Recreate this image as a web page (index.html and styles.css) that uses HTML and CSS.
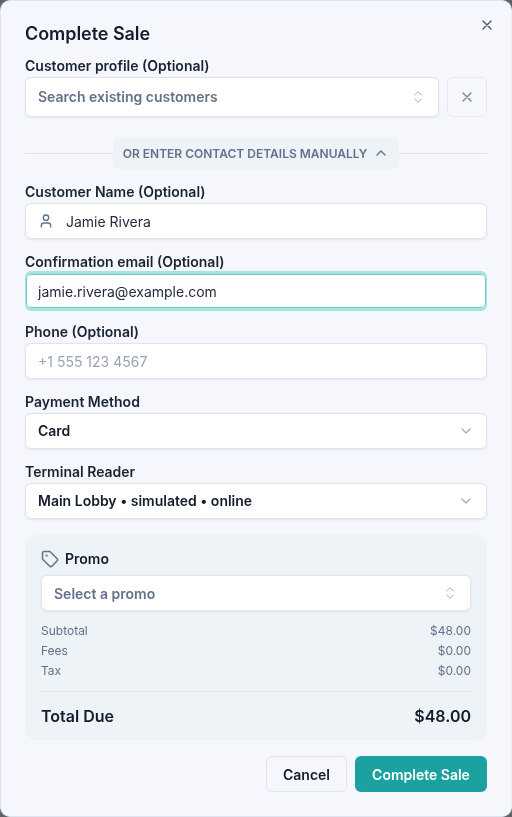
FILE: index.html
```html
<!DOCTYPE html>
<html lang="en">
<head>
<meta charset="utf-8">
<title>Complete Sale</title>
<link rel="stylesheet" href="styles.css">
</head>
<body>
<div class="modal">
  <button class="close" aria-label="Close"><svg width="16" height="16" viewBox="0 0 24 24" class="ic"><path d="M18 6 6 18M6 6l12 12"/></svg></button>
  <h1>Complete Sale</h1>
  <div class="label">Customer profile (Optional)</div>
  <div class="profile">
    <div class="input tall grow"><span class="ph semi lift">Search existing customers</span>
      <svg class="updown" width="16" height="16" viewBox="0 0 24 24"><path d="m7 15 5 5 5-5M7 9l5-5 5 5"/></svg></div>
    <button class="clear" aria-label="Clear"><svg width="16" height="16" viewBox="0 0 24 24" class="ic"><path d="M18 6 6 18M6 6l12 12"/></svg></button>
  </div>
  <div class="divider"><span class="pill">OR ENTER CONTACT DETAILS MANUALLY<svg width="16" height="16" viewBox="0 0 24 24"><path d="m18 15-6-6-6 6"/></svg></span></div>
  <div class="field">
    <div class="label">Customer Name (Optional)</div>
    <div class="input"><svg class="user" width="16" height="16" viewBox="0 0 24 24"><path d="M19 21v-2a4 4 0 0 0-4-4H9a4 4 0 0 0-4 4v2"/><circle cx="12" cy="7" r="4"/></svg><span class="val">Jamie Rivera</span></div>
  </div>
  <div class="field">
    <div class="label">Confirmation email (Optional)</div>
    <div class="input focus"><span class="val">jamie.rivera@example.com</span></div>
  </div>
  <div class="field">
    <div class="label">Phone (Optional)</div>
    <div class="input"><span class="ph light">+1 555 123 4567</span></div>
  </div>
  <div class="field">
    <div class="label">Payment Method</div>
    <div class="input"><span class="sel lift">Card</span><svg class="chev" width="16" height="16" viewBox="0 0 24 24"><path d="m6 9 6 6 6-6"/></svg></div>
  </div>
  <div class="field">
    <div class="label">Terminal Reader</div>
    <div class="input"><span class="sel lift">Main Lobby • simulated • online</span><svg class="chev" width="16" height="16" viewBox="0 0 24 24"><path d="m6 9 6 6 6-6"/></svg></div>
  </div>
  <section class="summary">
    <div class="promo-head"><svg width="18" height="18" viewBox="0 0 24 24"><path d="M12.586 2.586A2 2 0 0 0 11.172 2H4a2 2 0 0 0-2 2v7.172a2 2 0 0 0 .586 1.414l8.704 8.704a2.426 2.426 0 0 0 3.42 0l6.58-6.58a2.426 2.426 0 0 0 0-3.42z"/><circle cx="7.5" cy="7.5" r=".5"/></svg><span class="lift">Promo</span></div>
    <div class="input"><span class="ph semi">Select a promo</span><svg class="updown" width="16" height="16" viewBox="0 0 24 24"><path d="m7 15 5 5 5-5M7 9l5-5 5 5"/></svg></div>
    <div class="rows">
      <div class="row"><span>Subtotal</span><span>$48.00</span></div>
      <div class="row"><span>Fees</span><span>$0.00</span></div>
      <div class="row"><span>Tax</span><span>$0.00</span></div>
    </div>
    <div class="total"><span>Total Due</span><span class="amt">$48.00</span></div>
  </section>
  <div class="actions">
    <button class="btn cancel">Cancel</button>
    <button class="btn primary">Complete Sale</button>
  </div>
</div>
</body>
</html>
```
FILE: styles.css
```css
* { box-sizing: border-box; }
html, body { margin: 0; height: 100%; }
body { background: #5f6368; font-family: Inter, "Liberation Sans", sans-serif; color: #151c2c; overflow: hidden; }
svg { fill: none; stroke: currentColor; stroke-width: 2; stroke-linecap: round; stroke-linejoin: round; flex: none; }
button { font-family: inherit; cursor: pointer; }
.modal { position: relative; width: 512px; height: 817px; will-change: transform; background: #f5f7fc; border: 1px solid #dbe4f0; border-right-color: #eef1f6; border-radius: 10px; padding: 23px 24px 0; }
.close { position: absolute; top: 16px; right: 16px; width: 16px; height: 16px; padding: 0; background: none; border: 0; color: #4b5563; display: flex; }
h1 { margin: 0 0 12px; font-size: 18px; line-height: 20px; font-weight: 600; letter-spacing: -0.05px; }
.label { font-size: 14px; line-height: 20px; font-weight: 600; color: #1b2433; }
.field .label { line-height: 18px; padding-bottom: 2px; }
.profile { display: flex; gap: 8px; margin-top: 1px; }
.grow { flex: 1; }
.input { height: 36px; background: #fff; border: 1px solid #dfe4ef; border-radius: 6px; box-shadow: 0 1px 2px rgba(30,41,70,.08); display: flex; align-items: center; padding: 0 12px; font-size: 14px; }
.tall { height: 40px; }
.lift { padding-bottom: 2px; }
.clear { width: 40px; height: 40px; background: transparent; border: 1px solid #e4e8f1; border-radius: 6px; color: #7a8290; padding: 0; display: flex; align-items: center; justify-content: center; }
.ph { color: #64718a; }
.semi { font-weight: 600; }
.light { color: #9aa3b2; }
.val { color: #232c3c; }
.sel { font-weight: 600; color: #151c2c; }
.updown { margin-left: auto; color: #a3acba; stroke-width: 1.5; }
.chev { margin-left: auto; color: #a3acba; }
.user { color: #64718a; margin-right: 12px; }
.divider { display: flex; justify-content: center; margin: 20px 0 0; height: 32px; background: linear-gradient(#dfe4ef, #dfe4ef) center / 100% 1px no-repeat; }
.pill { display: flex; align-items: center; gap: 6px; background: #eef3f8; border-radius: 6px; padding: 0 10px; font-size: 12px; font-weight: 600; color: #64718a; height: 32px; }
.pill svg { width: 16px; height: 16px; }
.field { margin-top: 14px; }
.focus { border-color: #a9e3df; box-shadow: inset 0 0 0 1px #5ed0c8, 0 -2px 0 0 #a9e3df, 0 2px 0 0 #a9e3df; }
.summary { background: #eef3f8; border-radius: 10px; margin-top: 16px; padding: 15px 16px 16px; height: 205px; }
.promo-head { display: flex; align-items: center; gap: 6px; font-size: 14px; font-weight: 600; height: 18px; margin-bottom: 7px; margin-top: 0; }
.promo-head svg { color: #64718a; width: 18px; height: 18px; }
.rows { margin-top: 10px; }
.row { display: flex; justify-content: space-between; font-size: 12px; line-height: 20px; color: #64718a; }
.total { display: flex; justify-content: space-between; align-items: center; margin-top: 10px; padding-top: 12px; border-top: 1px solid #dfe4ef; font-size: 16px; font-weight: 600; line-height: 24px; }
.amt { font-size: 16px; }
.actions { display: flex; justify-content: flex-end; gap: 8px; margin-top: 16px; }
.btn { height: 36px; border-radius: 6px; font-size: 14px; font-weight: 600; padding: 0 16px; }
.cancel { background: transparent; border: 1px solid #e1e5ef; color: #151c2c; width: 81px; }
.primary { background: #1ba19f; border: 0; color: #fff; width: 132px; }
```
